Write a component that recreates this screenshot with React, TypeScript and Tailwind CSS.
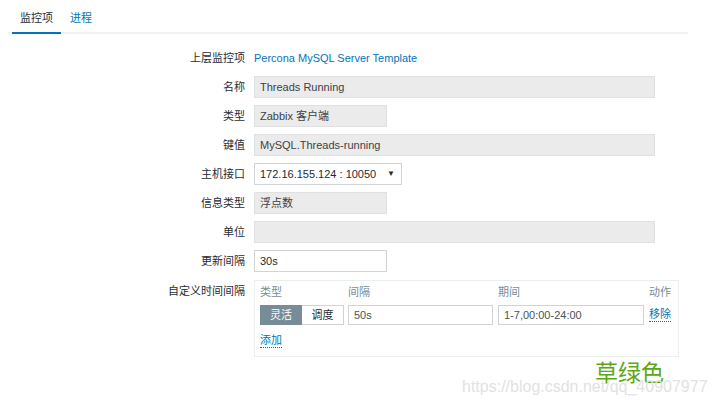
const FONT = { fontFamily: '"Liberation Sans", "Noto Sans CJK SC", sans-serif' };

type Row = { label: string; kind: "link" | "ro" | "input" | "select"; value: string; wide?: boolean };

const rows: Row[] = [
  { label: "上层监控项", kind: "link", value: "Percona MySQL Server Template" },
  { label: "名称", kind: "ro", value: "Threads Running", wide: true },
  { label: "类型", kind: "ro", value: "Zabbix 客户端" },
  { label: "键值", kind: "ro", value: "MySQL.Threads-running", wide: true },
  { label: "主机接口", kind: "select", value: "172.16.155.124 : 10050" },
  { label: "信息类型", kind: "ro", value: "浮点数" },
  { label: "单位", kind: "ro", value: "", wide: true },
  { label: "更新间隔", kind: "input", value: "30s" },
];

function Field({ row }: { row: Row }) {
  if (row.kind === "link") {
    return <a className="leading-[22px] text-[#0275b8]">{row.value}</a>;
  }
  if (row.kind === "select") {
    return (
      <div className="flex h-[22px] w-[148px] items-center justify-between border border-[#d0d4d6] bg-white pl-[5px] pr-[6px]">
        <span>{row.value}</span>
        <span className="text-[8px] text-[#1f2c33]">▼</span>
      </div>
    );
  }
  const ro = row.kind === "ro";
  return (
    <div
      className={`flex h-[22px] items-center border pl-[5px] ${row.wide ? "w-[401px]" : "w-[133px]"} ${
        ro ? "border-[#e0e0e0] bg-[#ebebeb] text-[#3c4246]" : "border-[#d0d4d6] bg-white"
      }`}
    >
      {row.value}
    </div>
  );
}

export default function App() {
  return (
    <div className="relative h-[407px] w-[714px] overflow-hidden bg-white text-[11px] text-[#1f2c33]" style={FONT}>
      {/* tabs */}
      <div className="ml-[8px] flex w-[680px] border-b-2 border-[#f1f3f3] pl-[4px]">
        <div className="-mb-[2px] border-b-2 border-[#0275b8] px-[8px] pt-[12px] pb-[7px] leading-[13px]">监控项</div>
        <div className="-mb-[2px] border-b-2 border-transparent px-[9px] pt-[12px] pb-[7px] leading-[13px] text-[#0275b8]">
          进程
        </div>
      </div>

      {/* form */}
      <div className="mt-[13px] grid grid-cols-[245px_auto] gap-x-[9px] gap-y-[7px]">
        {rows.map((r) => (
          <div key={r.label} className="contents">
            <div className="text-right leading-[22px]">{r.label}</div>
            <div className="flex">
              <Field row={r} />
            </div>
          </div>
        ))}

        <div className="mt-[1px] text-right leading-[22px]">自定义时间间隔</div>
        <div className="mt-[1px] w-[425px] border border-[#eceff0] pt-[4px] pr-[7px] pb-[8px] pl-[5px]">
          <div className="flex leading-[14px] text-[#768d99]">
            <div className="w-[88px]">类型</div>
            <div className="w-[150px]">间隔</div>
            <div className="w-[151px]">期间</div>
            <div className="flex-1 text-right">动作</div>
          </div>
          <div className="mt-[6px] flex items-center">
            <div className="flex h-[20px] w-[84px]">
              <div className="flex w-[42px] items-center justify-center bg-[#768d99] text-white">灵活</div>
              <div className="flex w-[42px] items-center justify-center border border-l-0 border-[#cdd3d6] bg-white">调度</div>
            </div>
            <div className="ml-[4px] flex h-[20px] w-[145px] items-center border border-[#d0d4d6] pl-[5px] text-[#4a5358]">50s</div>
            <div className="ml-[5px] flex h-[20px] w-[146px] items-center border border-[#d0d4d6] pl-[5px] text-[#4a5358]">
              1-7,00:00-24:00
            </div>
            <a className="ml-[5px] border-b border-dotted border-[#0275b8] leading-[13px] text-[#0275b8]">移除</a>
          </div>
          <div className="mt-[9px] flex">
            <a className="border-b border-dotted border-[#0275b8] leading-[13px] text-[#0275b8]">添加</a>
          </div>
        </div>
      </div>

      {/* watermarks */}
      <div className="absolute left-[595px] top-[359px] text-[23px] leading-[28px] text-[#5aa816]">草绿色</div>
      <div className="absolute left-[462px] top-[377px] text-[16px] leading-[20px] text-[#e2e2e2]">
        https://blog.csdn.net/qq_40907977
      </div>
    </div>
  );
}
